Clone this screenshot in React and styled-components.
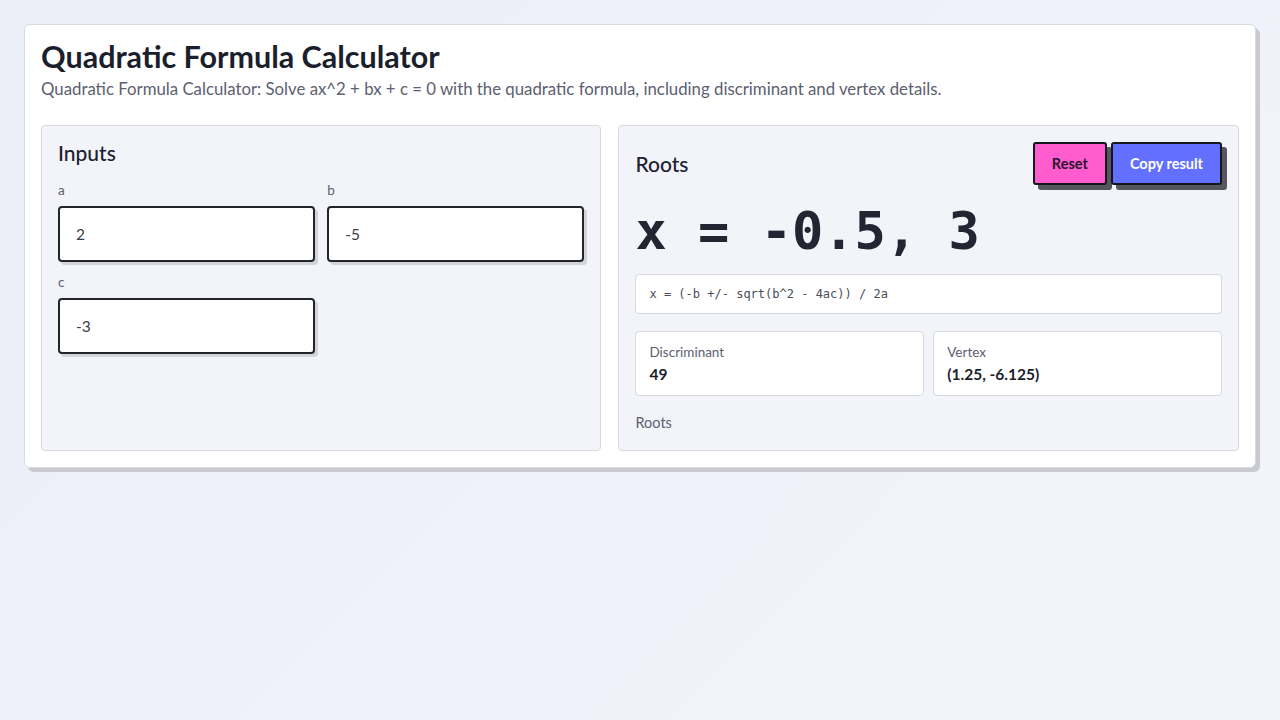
import React from 'react'
import styled, { createGlobalStyle } from 'styled-components'

const GlobalStyle = createGlobalStyle`
  body {
    margin: 0;
    background: linear-gradient(135deg, #eceef8 0%, #f3f4fb 100%);
    font-family: 'Lato', 'Noto Sans', sans-serif;
    color: #1d2030;
    min-height: 720px;
  }
`

const Page = styled.div`
  padding: 24px;
`

const Card = styled.div`
  background: #fff;
  border: 1px solid #d9dbe3;
  border-radius: 6px;
  box-shadow: 4px 4px 0 #c8cacf;
  padding: 14px 16px 16px;
`

const Title = styled.h1`
  margin: 0;
  font-size: 30.5px;
  font-weight: 700;
  line-height: 34px;
  color: #1b1e2b;
`

const Subtitle = styled.p`
  margin: 6px 0 26px;
  font-size: 16.8px;
  line-height: 20px;
  color: #5c6070;
`

const Columns = styled.div`
  display: grid;
  grid-template-columns: minmax(0, 560fr) minmax(0, 620fr);
  gap: 17px;
`

const Panel = styled.section`
  background: #f2f4fa;
  border: 1px solid #d6d9e2;
  border-radius: 4px;
  padding: 16px;
  min-height: 292px;
`

const PanelTitle = styled.h2`
  margin: 0;
  font-size: 21px;
  font-weight: 500;
  line-height: 22px;
`

const Fields = styled.div`
  display: grid;
  grid-template-columns: minmax(0, 1fr) minmax(0, 1fr);
  column-gap: 12px;
  row-gap: 12px;
  margin-top: 18px;
`

const Field = styled.label`
  display: flex;
  flex-direction: column;
  gap: 8px;
`

const FieldLabel = styled.span`
  font-size: 13.5px;
  color: #5c6070;
  line-height: 16px;
`

const Input = styled.input`
  box-sizing: border-box;
  width: 100%;
  height: 56px;
  border: 2px solid #23252d;
  border-radius: 4px;
  background: #fff;
  box-shadow: 3px 3px 0 #d2d4da;
  padding: 0 16px;
  font: inherit;
  font-size: 15.5px;
  color: #3a3d49;
  outline: none;
`

const ResultHead = styled.div`
  display: flex;
  align-items: center;
  justify-content: space-between;
`

const Buttons = styled.div`
  display: flex;
  gap: 4px;
`

const Button = styled.button`
  height: 43px;
  padding: 0 17px;
  border: 2px solid #16171d;
  border-radius: 3px;
  background: ${p => p.$bg};
  color: ${p => p.$fg};
  font-family: inherit;
  font-size: 14.5px;
  font-weight: 700;
  box-shadow: 5px 5px 0 #55565e;
  cursor: pointer;
`

const BigRoots = styled.div`
  font-family: 'DejaVu Sans Mono', monospace;
  font-weight: 700;
  font-size: 52px;
  line-height: 62px;
  margin: 15px 0 12px;
  color: #232632;
`

const Formula = styled.div`
  background: #fff;
  border: 1px solid #d6d9e2;
  border-radius: 4px;
  padding: 12px 13px;
  font-family: 'DejaVu Sans Mono', monospace;
  font-size: 12px;
  line-height: 14px;
  color: #4a4d59;
`

const Stats = styled.div`
  display: grid;
  grid-template-columns: 1fr 1fr;
  gap: 9px;
  margin-top: 17px;
`

const Stat = styled.div`
  background: #fff;
  border: 1px solid #d6d9e2;
  border-radius: 4px;
  padding: 12px 13px;
`

const StatLabel = styled.div`
  font-size: 13.5px;
  color: #5c6070;
  line-height: 16px;
`

const StatValue = styled.div`
  margin-top: 5px;
  font-size: 15.5px;
  font-weight: 700;
  line-height: 18px;
  color: #1b1e2b;
`

const Note = styled.div`
  margin-top: 18px;
  font-size: 14.5px;
  color: #5c6070;
`

export default function App() {
  return (
    <>
      <GlobalStyle />
      <Page>
        <Card>
          <Title>Quadratic Formula Calculator</Title>
          <Subtitle>
            Quadratic Formula Calculator: Solve ax^2 + bx + c = 0 with the quadratic formula, including discriminant and vertex details.
          </Subtitle>
          <Columns>
            <Panel>
              <PanelTitle>Inputs</PanelTitle>
              <Fields>
                <Field>
                  <FieldLabel>a</FieldLabel>
                  <Input defaultValue="2" />
                </Field>
                <Field>
                  <FieldLabel>b</FieldLabel>
                  <Input defaultValue="-5" />
                </Field>
                <Field>
                  <FieldLabel>c</FieldLabel>
                  <Input defaultValue="-3" />
                </Field>
              </Fields>
            </Panel>
            <Panel>
              <ResultHead>
                <PanelTitle>Roots</PanelTitle>
                <Buttons>
                  <Button $bg="#ff5ccf" $fg="#2a1530">Reset</Button>
                  <Button $bg="#6370ff" $fg="#fff">Copy result</Button>
                </Buttons>
              </ResultHead>
              <BigRoots>x = -0.5, 3</BigRoots>
              <Formula>x = (-b +/- sqrt(b^2 - 4ac)) / 2a</Formula>
              <Stats>
                <Stat>
                  <StatLabel>Discriminant</StatLabel>
                  <StatValue>49</StatValue>
                </Stat>
                <Stat>
                  <StatLabel>Vertex</StatLabel>
                  <StatValue>(1.25, -6.125)</StatValue>
                </Stat>
              </Stats>
              <Note>Roots</Note>
            </Panel>
          </Columns>
        </Card>
      </Page>
    </>
  )
}
